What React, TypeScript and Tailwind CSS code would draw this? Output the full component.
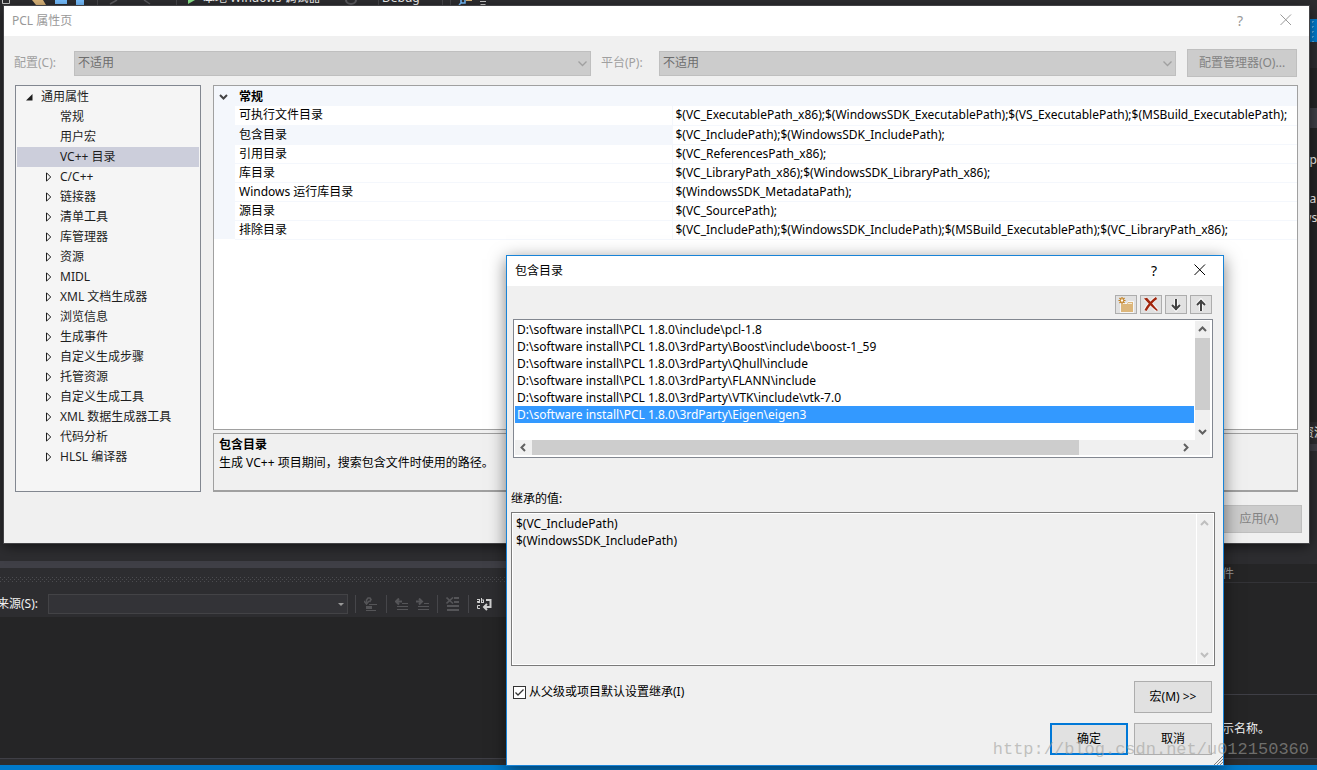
import { useState } from "react";
import type { ReactNode } from "react";

type Property = { name: string; value: string };

const treeItems = [
  { label: "常规", leaf: true },
  { label: "用户宏", leaf: true },
  { label: "VC++ 目录", leaf: true },
  { label: "C/C++" },
  { label: "链接器" },
  { label: "清单工具" },
  { label: "库管理器" },
  { label: "资源" },
  { label: "MIDL" },
  { label: "XML 文档生成器" },
  { label: "浏览信息" },
  { label: "生成事件" },
  { label: "自定义生成步骤" },
  { label: "托管资源" },
  { label: "自定义生成工具" },
  { label: "XML 数据生成器工具" },
  { label: "代码分析" },
  { label: "HLSL 编译器" },
];

const properties: Property[] = [
  {
    name: "可执行文件目录",
    value:
      "$(VC_ExecutablePath_x86);$(WindowsSDK_ExecutablePath);$(VS_ExecutablePath);$(MSBuild_ExecutablePath);",
  },
  { name: "包含目录", value: "$(VC_IncludePath);$(WindowsSDK_IncludePath);" },
  { name: "引用目录", value: "$(VC_ReferencesPath_x86);" },
  { name: "库目录", value: "$(VC_LibraryPath_x86);$(WindowsSDK_LibraryPath_x86);" },
  { name: "Windows 运行库目录", value: "$(WindowsSDK_MetadataPath);" },
  { name: "源目录", value: "$(VC_SourcePath);" },
  {
    name: "排除目录",
    value:
      "$(VC_IncludePath);$(WindowsSDK_IncludePath);$(MSBuild_ExecutablePath);$(VC_LibraryPath_x86);",
  },
];

const includeDirs = [
  "D:\\software install\\PCL 1.8.0\\include\\pcl-1.8",
  "D:\\software install\\PCL 1.8.0\\3rdParty\\Boost\\include\\boost-1_59",
  "D:\\software install\\PCL 1.8.0\\3rdParty\\Qhull\\include",
  "D:\\software install\\PCL 1.8.0\\3rdParty\\FLANN\\include",
  "D:\\software install\\PCL 1.8.0\\3rdParty\\VTK\\include\\vtk-7.0",
  "D:\\software install\\PCL 1.8.0\\3rdParty\\Eigen\\eigen3",
];

const chevrons = {
  up: "M1 6 L4.5 2.5 L8 6",
  down: "M1 3 L4.5 6.5 L8 3",
  left: "M6 1 L2.5 4.5 L6 8",
  right: "M3 1 L6.5 4.5 L3 8",
};

const Chevron = ({ dir }: { dir: keyof typeof chevrons }) => (
  <svg width="9" height="9" viewBox="0 0 9 9" fill="none" stroke="currentColor" strokeWidth="2">
    <path d={chevrons[dir]} />
  </svg>
);

const TitleButtons = () => (
  <div className="flex items-center gap-[35px] pr-[17px]">
    <button aria-label="帮助" className="w-[10px] text-center text-sm leading-4">
      ?
    </button>
    <button aria-label="关闭" className="flex pb-[3px]">
      <svg width="12" height="12" viewBox="0 0 12 12" fill="none" stroke="currentColor">
        <path d="M0.5 0.5 L11 11 M11 0.5 L0.5 11" />
      </svg>
    </button>
  </div>
);

const DisabledCombo = ({ id }: { id: string }) => (
  <div className="relative flex-1">
    <select
      id={id}
      disabled
      className="block h-[25px] w-full appearance-none border border-[#bfbfbf] bg-[#cccccc] px-[3px] text-[#6d6d6d] opacity-100"
    >
      <option>不适用</option>
    </select>
    <svg
      width="9"
      height="6"
      viewBox="0 0 9 6"
      fill="none"
      stroke="#a0a0a0"
      strokeWidth="1.3"
      className="pointer-events-none absolute right-1 top-[10px]"
    >
      <path d="M0.5 0.5 L4.5 4.5 L8.5 0.5" />
    </svg>
  </div>
);

const ToolButton = ({ label, children }: { label: string; children: ReactNode }) => (
  <button
    aria-label={label}
    className="flex h-[19px] w-[22px] items-center justify-center border border-[#adadad] bg-[#e1e1e1]"
  >
    {children}
  </button>
);

const Separator = () => <span className="h-[18px] w-px bg-[#46464a]" />;

/* Barra superior do IDE, quase toda escondida pela janela */
const IdeToolbar = () => (
  <div className="flex h-[6px] items-end overflow-hidden text-[#f1f1f1]">
    <svg width="203" height="6" viewBox="0 0 203 6" className="shrink-0">
      <path d="M2.5 0 V3.5 H9.5 V0" fill="none" stroke="#c8c8c8" />
      <path d="M32 0 H43 L46 5 H36 Z" fill="#dcb67a" />
      <path d="M55 0 H67 V4 H55 Z M76 0 H84 V5 H76 Z" fill="#75beff" />
      <path d="M97.5 0 V6 M176.5 0 V6" stroke="#46464a" />
      <path d="M110 4 L117 0 M144 0 L150 4" stroke="#5a5a5e" strokeWidth="1.5" />
      <path d="M188 0 H195 L188 4 Z" fill="#8ae28a" />
    </svg>
    <span className="w-[142px] shrink-0 leading-4">本地 Windows 调试器</span>
    <svg width="37" height="6" viewBox="0 0 37 6" className="shrink-0">
      <path d="M1 0 A5 4 0 0 0 11 0" fill="none" stroke="#5a5a5e" strokeWidth="2" />
      <path d="M33.5 0 V6" stroke="#46464a" />
    </svg>
    <span className="w-[60px] shrink-0 leading-4">Debug</span>
    <svg width="50" height="6" viewBox="0 0 50 6" className="shrink-0">
      <path d="M0.5 0 V6 M8.5 0 V6" stroke="#46464a" />
      <path d="M17 5 L20 2 M19 0 V3 H23 V0" fill="none" stroke="#75beff" strokeWidth="1.5" />
      <path d="M24 0 H30 V1 H24 Z" fill="#dcb67a" />
      <path d="M38 1 H44 V2 H38 Z M38 4 H44 L42 6 H40 Z" fill="#c8c8c8" />
    </svg>
  </div>
);

const OutputToolbar = () => (
  <div className="flex h-[26px] items-center">
    <label
      htmlFor="output-source"
      className="flex w-[38px] shrink-0 justify-end overflow-hidden whitespace-nowrap text-[#f1f1f1]"
    >
      来源(S):
    </label>
    <div className="relative ml-[10px] w-[300px] shrink-0">
      <select
        id="output-source"
        className="block h-5 w-full appearance-none border border-[#434346] bg-[#333337] text-[#f1f1f1]"
      />
      <svg width="6" height="3" viewBox="0 0 6 3" className="pointer-events-none absolute right-1 top-[9px]">
        <path d="M0 0 H6 L3 3 Z" fill="#999999" />
      </svg>
    </div>
    <div className="ml-[7px] flex items-center gap-2">
      <Separator />
      <button aria-label="查找消息">
        <svg width="14" height="15" viewBox="0 0 14 15" fill="none" stroke="#555558">
          <path d="M2.5 6 V3 L4 1 H6 L7 2.5 L5.5 5" strokeWidth="1.6" />
          <path d="M0 4 L2.500 7 L5 4" strokeWidth="1.5" />
          <path d="M5 7.500 H13" />
          <path d="M2 10.500 H8" strokeWidth="3" />
          <path d="M2 13.500 H12" />
        </svg>
      </button>
      <Separator />
      <button aria-label="上一条消息">
        <svg width="13" height="12" viewBox="0 0 13 12" stroke="#555558" fill="none">
          <path d="M1 3.5 H7 M4 0.5 L1 3.5 L4 6.5" strokeWidth="2" />
          <path d="M7 5.5 H13 M2 8.5 H13 M2 11.5 H13" />
        </svg>
      </button>
      <button aria-label="下一条消息">
        <svg width="13" height="12" viewBox="0 0 13 12" stroke="#555558" fill="none">
          <path d="M0 3.5 H6 M3 0.5 L6 3.5 L3 6.5" strokeWidth="2" />
          <path d="M8 5.5 H13 M2 8.5 H13 M2 11.5 H13" />
        </svg>
      </button>
      <Separator />
      <button aria-label="全部清除">
        <svg width="14" height="14" viewBox="0 0 14 14" stroke="#555558" fill="none">
          <path d="M0.5 0.5 L7 6.5 M7 0.5 L0.5 6.5" strokeWidth="1.6" />
          <path d="M8 1 H13 M8 5 H13 M1 9 H13 M1 13 H13" strokeWidth="2" />
        </svg>
      </button>
      <Separator />
      <button aria-label="切换自动换行">
        <svg width="15" height="13" viewBox="0 0 15 13" stroke="#d0d0d0" fill="none">
          <path d="M0 1.5 H3 M2.5 1 V5 M0 3.5 H3 M0.5 3 V4.5 H3 M4.5 0 V5 M5 2 H7 M6.5 2 V5 M5 4.5 H7" />
          <path d="M3 7.5 H0.5 V10.5 H3" />
          <path d="M9 2 H13.5 V9 H8 M10 6 L7 9 L10 12" strokeWidth="2" />
        </svg>
      </button>
    </div>
  </div>
);

/* Painéis do lado direito; só uma faixa aparece atrás das janelas */
const SidePanels = () => (
  <div className="flex w-[107px] shrink-0 flex-col overflow-hidden whitespace-nowrap bg-[#252526] text-[#f1f1f1]">
    <div className="h-[13px] bg-[#2d2d30]" />
    <div className="h-[23px] bg-[#007acc] bg-[radial-gradient(#59a8de_1px,transparent_1px)] bg-[size:5px_5px]" />
    <div className="h-[26px] bg-[#2d2d30]" />
    <div className="h-10" />
    <div className="h-5 bg-[#3f3f46]" />
    <div className="h-[294px] pl-[92px] pt-[22px] leading-[19px]">
      <p>pp</p>
      <p className="pt-5">ha</p>
      <p>ws</p>
    </div>
    <div className="h-[22px] bg-[#2d2d30] pl-[92px] leading-[22px]">资源</div>
    <div className="h-[7px] bg-[#3f3f46]" />
    <div className="h-[113px] bg-[#2d2d30]" />
    <div className="h-[19px] border-b border-[#333337] pl-3 leading-5 text-[#999999]">件</div>
    <div className="h-28 border-b border-[#3f3f46]" />
    <p className="grow pl-3 pt-[25px]">示名称。</p>
  </div>
);

const IdeBackground = () => (
  <div className="flex h-full flex-col bg-[#2d2d30]">
    <IdeToolbar />
    <div className="flex min-h-0 flex-1">
      <div className="flex flex-1 flex-col overflow-hidden pt-[555px]">
        <div className="h-[7px] shrink-0 bg-[#3f3f46]" />
        <div className="shrink-0 pt-[9px]">
          <svg width="100%" height="5">
            <defs>
              <pattern id="grip" width="4" height="4" patternUnits="userSpaceOnUse">
                <path d="M0 0 H1 V1 H0 Z M2 2 H3 V3 H2 Z" fill="#4c4c50" />
              </pattern>
            </defs>
            <rect width="100%" height="5" fill="url(#grip)" />
          </svg>
          <div className="pt-[9px]">
            <OutputToolbar />
          </div>
        </div>
        <div className="flex-1 bg-[#252526]" />
      </div>
      <SidePanels />
    </div>
    <div className="h-[7px] shrink-0 border-t border-[#3f3f46]" />
    <div className="h-[5px] shrink-0 bg-[#007acc]" />
  </div>
);

const PropertyTree = () => {
  const [selected, setSelected] = useState("VC++ 目录");

  return (
    <ul className="w-[186px] shrink-0 border border-[#828790] bg-[#f5f5f5] p-px leading-5 text-[#1e1e1e]">
      <li>
        <button className="flex w-full items-center pl-[9px]">
          <svg width="15" height="7" viewBox="0 0 15 7">
            <path d="M6.5 0 V6.5 H0 Z" fill="#1e1e1e" />
          </svg>
          通用属性
        </button>
        <ul>
          {treeItems.map((item) => (
            <li key={item.label}>
              <button
                onClick={() => setSelected(item.label)}
                className={`flex w-full items-center pl-[29px] ${
                  item.label === selected ? "bg-[#cccedb]" : ""
                }`}
              >
                <svg width="14" height="10" viewBox="0 0 14 10">
                  {!item.leaf && <path d="M0.5 0.8 V9.2 L4.7 5 Z" fill="none" stroke="#1e1e1e" />}
                </svg>
                {item.label}
              </button>
            </li>
          ))}
        </ul>
      </li>
    </ul>
  );
};

const PropertyGrid = () => (
  <div className="flex-1 border border-[#a0a0a0] bg-white text-black">
    <table className="w-full table-fixed border-collapse whitespace-nowrap text-left">
      <thead>
        <tr className="h-5 bg-[#f4f7fc]">
          <th className="w-[21px] pl-[5px] text-[#444444]">
            <Chevron dir="down" />
          </th>
          <th className="w-[437px] pl-1 font-bold leading-[19px]">常规</th>
          <th />
        </tr>
      </thead>
      <tbody>
        {properties.map((p) => (
          <tr key={p.name} className="h-[19px] leading-[18px]">
            <td className="bg-[#f4f7fc]" />
            <td
              className={`border-b border-r border-[#f4f7fc] pl-1 ${p.name === "包含目录" ? "bg-[#f4f7fc]" : ""}`}
            >
              {p.name}
            </td>
            <td className="border-b border-[#f4f7fc] pl-[3px]">{p.value}</td>
          </tr>
        ))}
      </tbody>
    </table>
  </div>
);

const PropertyPages = () => (
  <section className="absolute left-1 right-2 top-[6px] bg-[#f0f0f0] shadow-[0_3px_12px_rgba(0,0,0,0.6)] outline outline-[#434346]">
    <header className="flex h-[30px] items-center justify-between bg-white pl-2 text-[#999999]">
      <h1>PCL 属性页</h1>
      <TitleButtons />
    </header>
    <div className="flex items-center pl-[10px] pr-3 pt-[13px] text-[#a0a0a0]">
      <label htmlFor="configuration" className="w-[60px]">
        配置(C):
      </label>
      <DisabledCombo id="configuration" />
      <label htmlFor="platform" className="w-[68px] pl-[10px]">
        平台(P):
      </label>
      <DisabledCombo id="platform" />
      <button disabled className="ml-[11px] h-7 w-[110px] border border-[#bfbfbf] bg-[#cccccc] text-[#838383]">
        配置管理器(O)...
      </button>
    </div>
    <div className="flex h-[415px] gap-3 px-[11px] pt-2">
      <PropertyTree />
      <div className="flex min-w-0 flex-1 flex-col gap-[3px]">
        <PropertyGrid />
        <div className="h-[59px] border border-b-2 border-[#a0a0a0] pl-[5px] pt-[2px] leading-[18px] text-black">
          <h2 className="font-bold">包含目录</h2>
          <p>生成 VC++ 项目期间，搜索包含文件时使用的路径。</p>
        </div>
      </div>
    </div>
    <div className="flex justify-end pb-[10px] pr-[7px] pt-[13px]">
      <button disabled className="h-7 w-[86px] border border-[#bfbfbf] bg-[#cccccc] text-[#838383]">
        应用(A)
      </button>
    </div>
  </section>
);

const DirectoryList = () => {
  const [active, setActive] = useState(5);

  return (
    <div className="ml-[6px] mr-[10px] mt-[5px] h-[139px] border border-[#828790] bg-white p-px text-black">
      <div className="flex h-[119px]">
        <ul role="listbox" aria-label="包含目录" className="flex-1 pr-px leading-[17px]">
          {includeDirs.map((dir, i) => (
            <li
              key={dir}
              role="option"
              aria-selected={i === active}
              onClick={() => setActive(i)}
              className={`whitespace-pre pl-[2px] ${i === active ? "bg-[#3399ff] text-white" : ""}`}
            >
              {dir}
            </li>
          ))}
        </ul>
        {/* Barra de rolagem vertical */}
        <div className="mr-px flex w-[15px] flex-col bg-[#f0f0f0] text-[#606060]">
          <button aria-label="向上滚动" className="flex h-[17px] items-center justify-center">
            <Chevron dir="up" />
          </button>
          <div className="h-[72px] bg-[#cdcdcd]" />
          <button aria-label="向下滚动" className="mt-auto flex h-[17px] items-center justify-center">
            <Chevron dir="down" />
          </button>
        </div>
      </div>
      {/* Barra de rolagem horizontal */}
      <div className="mr-px flex h-[15px] bg-[#f0f0f0] pr-4 text-[#606060]">
        <button aria-label="向左滚动" className="flex w-[17px] items-center justify-center">
          <Chevron dir="left" />
        </button>
        <div className="w-[547px] bg-[#cdcdcd]" />
        <button aria-label="向右滚动" className="ml-auto flex w-[17px] items-center justify-center">
          <Chevron dir="right" />
        </button>
      </div>
    </div>
  );
};

const IncludeDialog = () => {
  const [inherit, setInherit] = useState(true);

  return (
    <section className="absolute left-[506px] top-[255px] w-[718px] border border-[#1883d7] bg-[#f0f0f0] text-black shadow-[0_4px_16px_rgba(0,0,0,0.5)]">
      <header className="flex h-[30px] items-center justify-between bg-white pl-2">
        <h2>包含目录</h2>
        <TitleButtons />
      </header>

      <div className="flex justify-end gap-[3px] pr-[11px] pt-[9px]">
        <ToolButton label="新行">
          <svg width="16" height="16" viewBox="0 0 16 16">
            <path d="M2 6 H9 L10 4 H16 V16 H2 Z" fill="#f6f6f6" />
            <path d="M3 7 H9 L10 5 H15 V15 H3 Z" fill="#dcb67a" />
            <path d="M10 6.5 H14" stroke="#f6ead2" />
            <path
              d="M4 0 V7 M0.5 3.5 H7.5 M1.5 1 L6.5 6 M6.5 1 L1.5 6"
              stroke="#c27d1a"
              fill="none"
              strokeWidth="1.2"
            />
            <circle cx="4" cy="3.5" r="1.2" fill="#ffffff" />
          </svg>
        </ToolButton>
        <ToolButton label="删除">
          <svg width="16" height="15" viewBox="0 0 16 15" fill="none">
            <path d="M2 1.5 C6 4 10 9 14 13.5 M13 1 C9 4 5 9 2 13.5" stroke="#f6f6f6" strokeWidth="4" />
            <path d="M1 1.5 L4 0.8 C7 4 11 9 15 13.2 L13.5 13.8 C9 10 5 6 1 1.5 Z" fill="#a1260d" />
            <path d="M13.5 1 C9 4 5 9 2.5 13.5" stroke="#a1260d" strokeWidth="2.4" />
          </svg>
        </ToolButton>
        <ToolButton label="下移">
          <svg width="12" height="14" viewBox="0 0 12 14" fill="none">
            <path d="M6 1 V12 M2 7 L6 11.500 L10 7" stroke="#f6f6f6" strokeWidth="4" />
            <path d="M6 1 V12 M2 7 L6 11 L10 7" stroke="#424242" strokeWidth="2" />
          </svg>
        </ToolButton>
        <ToolButton label="上移">
          <svg width="12" height="14" viewBox="0 0 12 14" fill="none">
            <path d="M6 13 V2 M2 7 L6 2.500 L10 7" stroke="#f6f6f6" strokeWidth="4" />
            <path d="M6 13 V2 M2 7 L6 3 L10 7" stroke="#424242" strokeWidth="2" />
          </svg>
        </ToolButton>
      </div>

      <DirectoryList />

      <label htmlFor="inherited" className="mt-[33px] block pl-1 leading-4">
        继承的值:
      </label>
      <div className="ml-1 mr-2 mt-[5px] flex h-[154px] border border-[#7a7a7a] p-px outline outline-offset-[-2px] outline-white">
        <textarea
          id="inherited"
          readOnly
          value={"$(VC_IncludePath)\n$(WindowsSDK_IncludePath)"}
          className="flex-1 resize-none overflow-hidden border-r border-white bg-[#f0f0f0] px-[3px] pt-px leading-[17px]"
        />
        <div className="flex w-4 flex-col justify-between py-[5px] pl-[3px] text-[#bfbfbf]">
          <Chevron dir="up" />
          <Chevron dir="down" />
        </div>
      </div>

      <div className="flex items-start justify-between pl-[6px] pr-[11px] pt-[15px]">
        <label className="flex items-center gap-[3px] pt-[3px] leading-4">
          <span className="relative flex">
            <input
              type="checkbox"
              checked={inherit}
              onChange={() => setInherit(!inherit)}
              className="h-[13px] w-[13px] appearance-none border border-[#333333] bg-white"
            />
            {inherit && (
              <svg
                width="13"
                height="13"
                viewBox="0 0 13 13"
                className="pointer-events-none absolute left-0 top-0"
                fill="none"
                stroke="#333333"
                strokeWidth="1.3"
              >
                <path d="M2.5 6.5 L5 9 L10.5 3.5" />
              </svg>
            )}
          </span>
          从父级或项目默认设置继承(I)
        </label>
        <button className="h-8 w-[78px] border border-[#adadad] bg-[#e1e1e1]">宏(M) &gt;&gt;</button>
      </div>
      <div className="flex justify-end gap-[6px] pb-[10px] pr-[11px] pt-[10px]">
        <button className="h-8 w-[78px] border-2 border-[#0078d7] bg-[#e1e1e1]">确定</button>
        <button className="h-8 w-[78px] border border-[#adadad] bg-[#e1e1e1]">取消</button>
      </div>
      <svg width="9" height="9" viewBox="0 0 9 9" className="absolute bottom-0 right-0" stroke="#808080">
        <path d="M0 9 L9 0 M3 9 L9 3 M6 9 L9 6" />
      </svg>
    </section>
  );
};

export default function App() {
  return (
    <main className="relative h-screen overflow-hidden font-['Noto_Sans','Noto_Sans_CJK_SC',sans-serif] text-[12px]">
      <IdeBackground />
      <PropertyPages />
      <IncludeDialog />
      {/* Marca d'água sobre tudo */}
      <p className="pointer-events-none absolute bottom-2 right-2 font-['Liberation_Mono',monospace] text-[17px] leading-6 text-[#a0a09c]/60">
        http://blog.csdn.net/u012150360
      </p>
    </main>
  );
}
